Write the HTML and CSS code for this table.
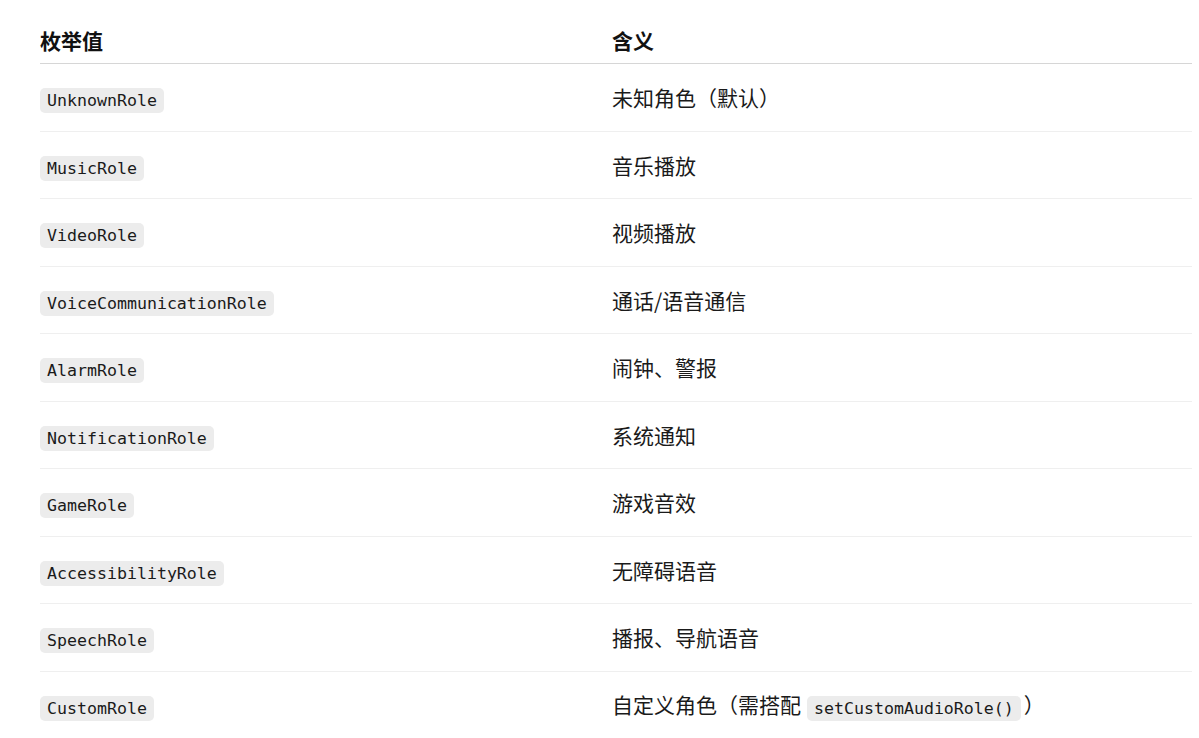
FILE: index.html
```html
<!DOCTYPE html>
<html lang="zh-CN">
<head>
<meta charset="utf-8">
<title>枚举值</title>
<link rel="stylesheet" href="styles.css">
</head>
<body>
<div class="page">
  <div class="table">
    <div class="row head">
      <div class="cell">枚举值</div>
      <div class="cell">含义</div>
    </div>
    <div class="row"><div class="cell"><code>UnknownRole</code></div><div class="cell">未知角色（默认）</div></div>
    <div class="row"><div class="cell"><code>MusicRole</code></div><div class="cell">音乐播放</div></div>
    <div class="row"><div class="cell"><code>VideoRole</code></div><div class="cell">视频播放</div></div>
    <div class="row"><div class="cell"><code>VoiceCommunicationRole</code></div><div class="cell">通话/语音通信</div></div>
    <div class="row"><div class="cell"><code>AlarmRole</code></div><div class="cell">闹钟、警报</div></div>
    <div class="row"><div class="cell"><code>NotificationRole</code></div><div class="cell">系统通知</div></div>
    <div class="row"><div class="cell"><code>GameRole</code></div><div class="cell">游戏音效</div></div>
    <div class="row"><div class="cell"><code>AccessibilityRole</code></div><div class="cell">无障碍语音</div></div>
    <div class="row"><div class="cell"><code>SpeechRole</code></div><div class="cell">播报、导航语音</div></div>
    <div class="row"><div class="cell"><code>CustomRole</code></div><div class="cell">自定义角色（需搭配<code class="inline">setCustomAudioRole()</code>）</div></div>
  </div>
</div>
</body>
</html>
```
FILE: styles.css
```css
html, body {
  margin: 0;
  padding: 0;
  background: #ffffff;
}
body {
  font-family: "Noto Sans CJK SC", "Noto Sans", sans-serif;
  font-size: 21px;
  color: #1a1a1a;
}
.page {
  padding: 17px 0 0 40px;
}
.table {
  width: 1152px;
  display: flex;
  flex-direction: column;
}
.row {
  display: grid;
  grid-template-columns: 572px 1fr;
  align-items: center;
  height: 66.5px;
  border-bottom: 1px solid #efefef;
}
.row.head {
  height: 46px;
  border-bottom: 1px solid #d6d6d6;
  font-weight: 700;
  color: #111111;
}
.cell {
  line-height: 28px;
  white-space: nowrap;
}
code {
  display: inline-block;
  vertical-align: middle;
  font-family: "DejaVu Sans Mono", monospace;
  font-size: 16.6px;
  line-height: 19px;
  background: #ececec;
  border-radius: 5px;
  padding: 3px 7px 3px 7px;
  color: #1a1a1a;
  position: relative;
  top: 1px;
}
code.inline {
  margin: 0 3px 0 6px;
}
```
